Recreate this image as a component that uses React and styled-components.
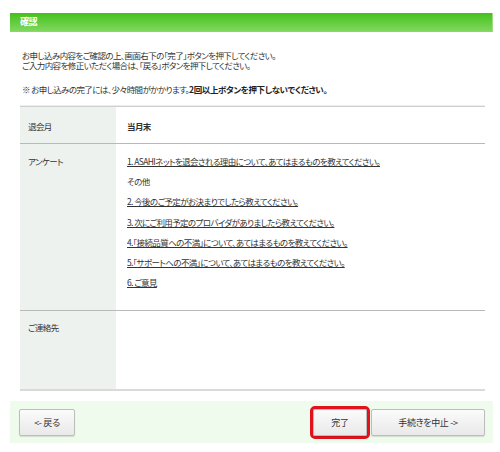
import React from "react";
import styled, { createGlobalStyle } from "styled-components";

const Global = createGlobalStyle`
  html, body { margin: 0; padding: 0; background: #fff; }
  body {
    font-family: "Noto Sans CJK JP", "Noto Sans", sans-serif;
    font-size: 8.5px;
    letter-spacing: -0.6px;
    color: #333;
    font-feature-settings: "palt";
  }
`;

const Page = styled.div`
  width: 483px;
  padding: 13px 0 0 10px;
  border-top: 3px solid #f3f3f3;
  margin-top: -3px;
`;

const Header = styled.div`
  height: 19px;
  box-sizing: border-box;
  background: linear-gradient(#44c11c, #80d75e);
  border-right: 1px solid #9bdc80;
  border-bottom: 1px solid #8ed572;
  color: #fff;
  font-weight: bold;
  font-size: 9px;
  line-height: 18px;
  padding-left: 10px;
`;

const Body = styled.div`
  padding: 0 8px 0 10px;
`;

const Para = styled.p`
  margin: ${(p) => p.$mt || 0}px 0 0 2px;
  line-height: 10px;
  white-space: nowrap;
`;

const Strong = styled.b`
  font-weight: bold;
  color: #222;
  letter-spacing: -0.4px;
`;

const Table = styled.div`
  margin-top: 12px;
  border-top: 1px solid #cfcfcf;
  border-bottom: 2px solid #dadada;
  box-shadow: 0 -1px 0 #ececec;
`;

const Row = styled.div`
  display: grid;
  grid-template-columns: 96px 1fr;
  & + & { border-top: 1px solid #b9b9b9; }
`;

const Label = styled.div`
  background: #eef2ee;
  padding: ${(p) => p.$pt}px 0 ${(p) => p.$pb}px 8px;
  line-height: 10px;
`;

const Value = styled.div`
  padding: ${(p) => p.$pt}px 0 ${(p) => p.$pb}px 11px;
  line-height: 10px;
  display: flex;
  flex-direction: column;
  align-items: flex-start;
  gap: 10.2px;
  font-weight: ${(p) => (p.$bold ? "bold" : "normal")};
`;

const Link = styled.span`
  text-decoration: underline;
  text-underline-offset: 1px;
  white-space: nowrap;
`;

const Footer = styled.div`
  margin-top: 10px;
  height: 42px;
  box-sizing: border-box;
  background: #effbec;
  padding: 8px 8px 0 9px;
  display: flex;
  align-items: flex-start;
`;

const Button = styled.button`
  height: 27px;
  width: ${(p) => p.$w}px;
  box-sizing: border-box;
  border: 1px solid #bdbdbd;
  border-radius: 2px;
  background: linear-gradient(#fbfbfb, #e9e9e9);
  box-shadow: 0 1px 1px rgba(0, 0, 0, 0.12);
  font-family: inherit;
  font-feature-settings: "palt";
  font-size: 9px;
  letter-spacing: -0.3px;
  color: #333;
  padding: 0;
  cursor: pointer;
`;

const Spacer = styled.div`
  flex: 1;
`;

const Highlight = styled.div`
  border: 3px solid #e3121c;
  border-radius: 5px;
  margin-top: -3px;
  margin-right: 1px;
  display: flex;
`;

export default function App() {
  const survey = [
    { t: "1. ASAHIネットを退会される理由について、あてはまるものを教えてください。", link: true },
    { t: "その他", link: false },
    { t: "2. 今後のご予定がお決まりでしたら教えてください。", link: true },
    { t: "3. 次にご利用予定のプロバイダがありましたら教えてください。", link: true },
    { t: "4.「接続品質への不満」について、あてはまるものを教えてください。", link: true },
    { t: "5.「サポートへの不満」について、あてはまるものを教えてください。", link: true },
    { t: "6. ご意見", link: true },
  ];
  return (
    <>
      <Global />
      <Page>
        <Header>確認</Header>
        <Body>
          <Para $mt={18}>お申し込み内容をご確認の上、画面右下の「完了」ボタンを押下してください。</Para>
          <Para>ご入力内容を修正いただく場合は、「戻る」ボタンを押下してください。</Para>
          <Para $mt={14}>
            ※ お申し込みの完了には、少々時間がかかります。<Strong>2回以上ボタンを押下しないでください。</Strong>
          </Para>
          <Table>
            <Row>
              <Label $pt={14} $pb={12}>退会月</Label>
              <Value $pt={14} $pb={12} $bold>当月末</Value>
            </Row>
            <Row>
              <Label $pt={12} $pb={23}>アンケート</Label>
              <Value $pt={12} $pb={23}>
                {survey.map((s, i) =>
                  s.link ? <Link key={i}>{s.t}</Link> : <span key={i}>{s.t}</span>
                )}
              </Value>
            </Row>
            <Row>
              <Label $pt={11} $pb={57}>ご連絡先</Label>
              <Value $pt={11} $pb={57}></Value>
            </Row>
          </Table>
        </Body>
        <Footer>
          <Button $w={56}>&lt;- 戻る</Button>
          <Spacer />
          <Highlight>
            <Button $w={54}>完了</Button>
          </Highlight>
          <Button $w={114}>手続きを中止 -&gt;</Button>
        </Footer>
      </Page>
    </>
  );
}
